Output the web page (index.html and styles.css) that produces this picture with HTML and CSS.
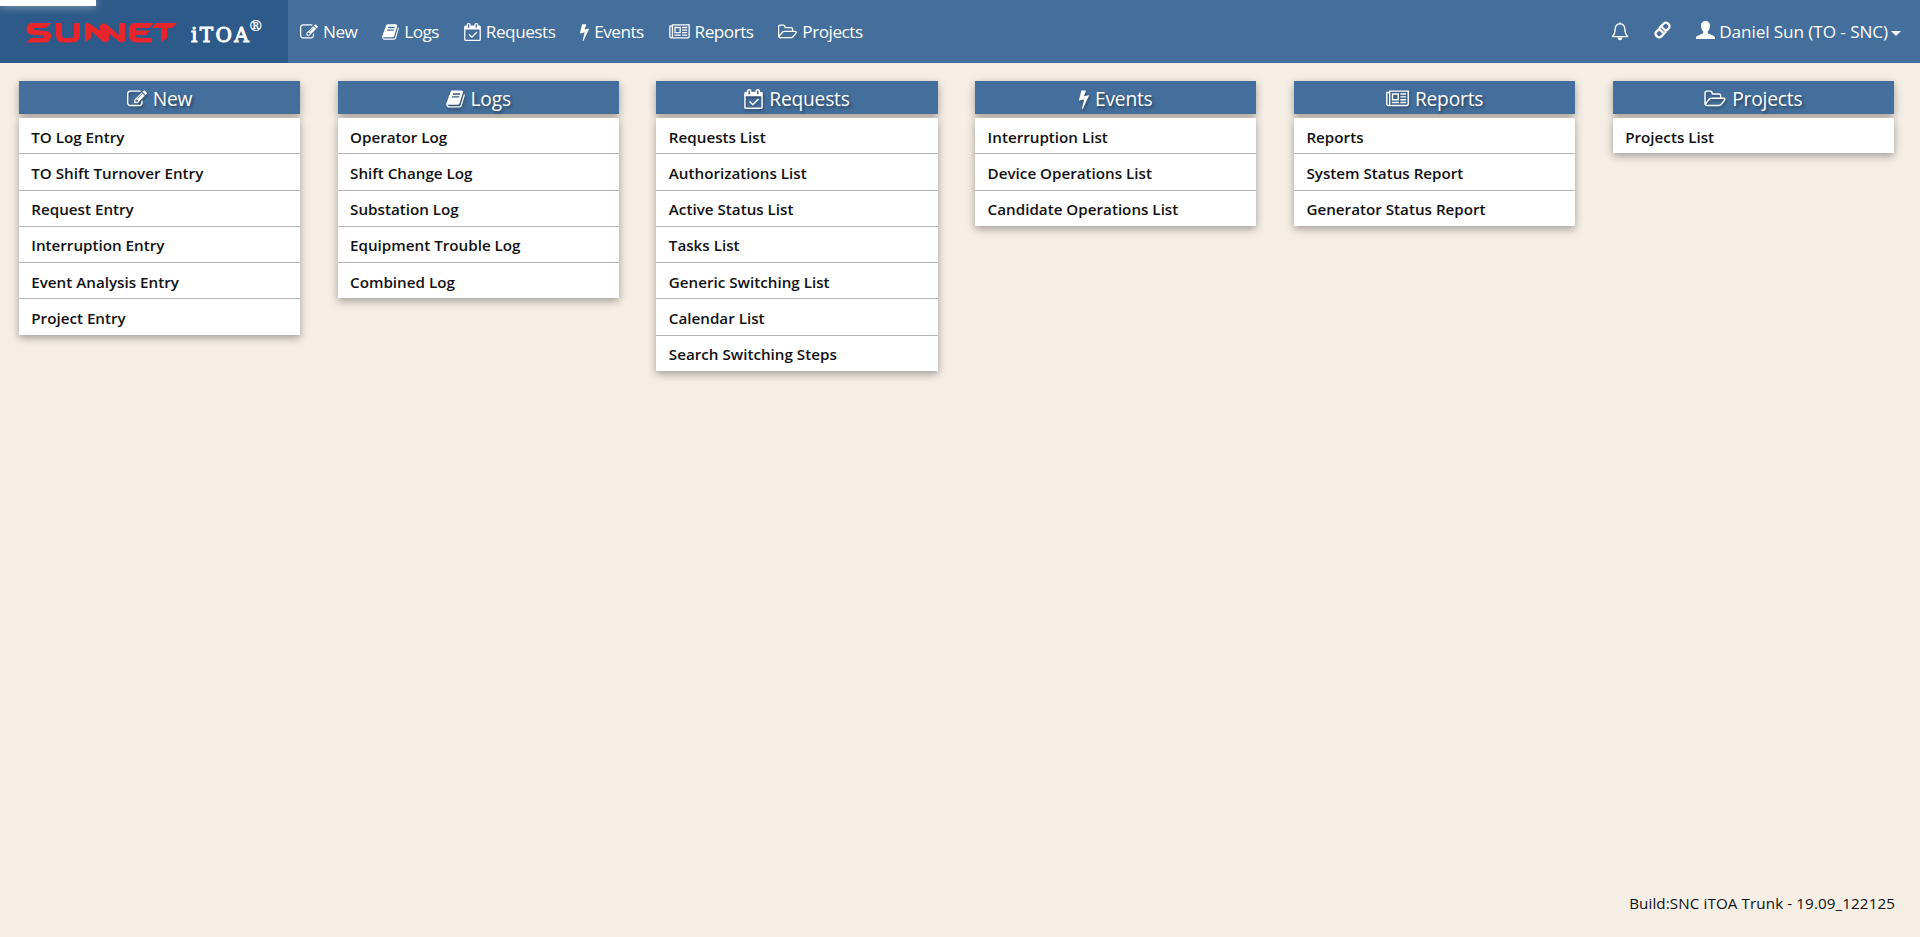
FILE: index.html
```html
<!DOCTYPE html>
<html lang="en">
<head>
<meta charset="utf-8">
<title>iTOA</title>
<link rel="stylesheet" href="styles.css">
</head>
<body>
<svg class="defs" aria-hidden="true">
  <symbol id="i-new" viewBox="0 0 1792 1792"><path d="M888 1184l116-116-152-152-116 116v56h96v96h56zm440-720q-16-16-33 1l-350 350q-17 17-1 33t33-1l350-350q17-17 1-33zm80 594v190q0 119-84.500 203.500t-203.500 84.500h-832q-119 0-203.500-84.500t-84.500-203.500v-832q0-119 84.500-203.500t203.500-84.500h832q63 0 117 25 15 7 18 23 3 17-9 29l-49 49q-14 14-32 8-23-6-45-6h-832q-66 0-113 47t-47 113v832q0 66 47 113t113 47h832q66 0 113-47t47-113v-126q0-13 9-22l64-64q15-15 35-7t20 29zm-96-738l288 288-672 672h-288v-288zm444 132l-92 92-288-288 92-92q28-28 68-28t68 28l152 152q28 28 28 68t-28 68z"/></symbol>
  <symbol id="i-book" viewBox="64 0 1664 1792"><path d="M1703 478q40 57 18 129l-275 906q-19 64-76.500 107.500t-122.500 43.500h-923q-77 0-148.500-53.500t-99.500-131.500q-24-67-2-127 0-4 3-27t4-37q1-8-3-21.500t-3-19.500q2-11 8-21t16.500-23.500 16.500-23.500q23-38 45-91.500t30-91.500q3-10 .5-30t-.5-28q3-11 17-28t17-23q21-36 42-92t25-90q1-9-2.500-32t.5-28q4-13 22-30.500t22-22.500q19-26 42.500-84.500t27.500-96.500q1-8-3-25.500t-2-26.500q2-8 9-18t18-23 17-21q8-12 16.500-30.500t15-35 16-36 19.500-32 26.500-23.500 36-11.500 47.500 5.500l-1 3q38-9 51-9h761q74 0 114 56t18 130l-274 906q-36 119-71.500 153.500t-128.500 34.500h-869q-27 0-38 15-11 16-1 43 24 70 144 70h923q29 0 56-15.500t35-41.500l300-987q7-22 5-57 38 15 59 43zm-1064 2q-4 13 2 22.500t20 9.500h608q13 0 25.500-9.500t16.500-22.500l21-64q4-13-2-22.500t-20-9.500h-608q-13 0-25.500 9.500t-16.500 22.500zm-83 256q-4 13 2 22.500t20 9.500h608q13 0 25.500-9.500t16.500-22.500l21-64q4-13-2-22.500t-20-9.500h-608q-13 0-25.500 9.500t-16.500 22.500z"/></symbol>
  <symbol id="i-cal" viewBox="0 0 1664 1792"><path d="M1303 964l-512 512q-10 9-23 9t-23-9l-288-288q-9-10-9-23t9-22l46-46q9-9 22-9t23 9l220 220 444-444q10-9 23-9t22 9l46 46q9 9 9 22t-9 23zm-1175 700h1408v-1024h-1408v1024zm384-1216v-288q0-14-9-23t-23-9h-64q-14 0-23 9t-9 23v288q0 14 9 23t23 9h64q14 0 23-9t9-23zm768 0v-288q0-14-9-23t-23-9h-64q-14 0-23 9t-9 23v288q0 14 9 23t23 9h64q14 0 23-9t9-23zm384-64v1280q0 52-38 90t-90 38h-1408q-52 0-90-38t-38-90v-1280q0-52 38-90t90-38h128v-96q0-66 47-113t113-47h64q66 0 113 47t47 113v96h384v-96q0-66 47-113t113-47h64q66 0 113 47t47 113v96h128q52 0 90 38t38 90z"/></symbol>
  <symbol id="i-bolt" viewBox="448 0 896 1792"><path d="M1333 566q18 20 7 44l-540 1157q-13 25-42 25-4 0-14-2-17-5-25.500-19t-4.500-30l197-808-406 101q-4 1-12 1-18 0-31-11-18-15-13-39l201-825q4-14 16-23t28-9h328q19 0 32 12.500t13 29.500q0 8-5 18l-171 463 396-98q8-2 12-2 19 0 34 15z"/></symbol>
  <symbol id="i-news" viewBox="0 0 2048 1792"><path d="M1024 512h-384v384h384v-384zm128 640v128h-640v-128h640zm0-768v640h-640v-640h640zm640 768v128h-512v-128h512zm0-256v128h-512v-128h512zm0-256v128h-512v-128h512zm0-256v128h-512v-128h512zm-1536 960v-960h-128v960q0 26 19 45t45 19 45-19 19-45zm1664 0v-1088h-1536v1088q0 33-11 64h1483q26 0 45-19t19-45zm128-1216v1216q0 80-56 136t-136 56h-1664q-80 0-136-56t-56-136v-1088h256v-128h1792z"/></symbol>
  <symbol id="i-folder" viewBox="64 0 1920 1792"><path d="M1845 931q0-35-53-35h-1088q-40 0-85.500 21.500t-71.500 52.500l-294 363q-18 24-18 40 0 35 53 35h1088q40 0 86-22t71-53l294-363q18-22 18-39zm-1141-163h768v-160q0-40-28-68t-68-28h-576q-40 0-68-28t-28-68v-64q0-40-28-68t-68-28h-320q-40 0-68 28t-28 68v853l256-315q44-53 116-87.500t140-34.500zm1269 163q0 62-46 120l-295 363q-43 53-116 87.500t-140 34.500h-1088q-92 0-158-66t-66-158v-960q0-92 66-158t158-66h320q92 0 158 66t66 158v32h544q92 0 158 66t66 158v160h192q54 0 99 24.500t67 70.500q15 32 15 68z"/></symbol>
</svg>

<div class="loading-bar"></div>
<header class="navbar">
  <a class="brand">
    <svg class="logo" viewBox="0 0 151 20">
      <path d="M5 0H25L20 5H8.500Q7 6 8.500 7L20 8Q26 9 25 14Q24 19.500 18 19.500H0L5 15H17Q19.500 14 17 12.500L5 11.500Q0 10 0.500 6Q1 1 5 0Z"/>
      <path d="M30 0H36V12Q36 15 39 15H45Q48 15 48 12V0H54V12Q54 19.500 46 19.500H38Q30 19.500 30 12Z"/>
      <path d="M59 19.500V2Q60-1 63.500 .5L74 8V3Q76-1 80 1L93 12V0H99V18Q97 20.500 94 19L83 10.500V17Q80 21 77 18.500L65 8V15Z"/>
      <path d="M109 0H128L123 5H112Q109.500 5 109.500 7.500H124L120 12H109.500Q109.500 15 113 15H126V19.500H111Q103 19.500 103 12V7Q103 0 109 0Z"/>
      <path d="M130 0H151L146 5H141V15L135 19.500V5H126Z"/>
    </svg>
    <span class="product">iTOA<sup>®</sup></span>
  </a>
  <nav class="menu">
    <a><svg class="ic w18"><use href="#i-new"/></svg><span>New</span></a>
    <a><svg class="ic w17"><use href="#i-book"/></svg><span>Logs</span></a>
    <a><svg class="ic w17"><use href="#i-cal"/></svg><span>Requests</span></a>
    <a><svg class="ic w9"><use href="#i-bolt"/></svg><span>Events</span></a>
    <a><svg class="ic w21"><use href="#i-news"/></svg><span>Reports</span></a>
    <a><svg class="ic w19"><use href="#i-folder"/></svg><span>Projects</span></a>
  </nav>
  <div class="tools">
    <svg class="bell" viewBox="0 0 18 19"><path d="M9 1.800C5.500 1.800 4.300 4.500 4.200 7C4.100 11 3.200 12.800 1.300 14.700H16.700C14.800 12.800 13.900 11 13.800 7C13.700 4.500 12.500 1.800 9 1.800Z" fill="none" stroke="#fff" stroke-width="1.300" stroke-linejoin="round"/><path d="M8.200 .4h1.600v1.500H8.200zM6.500 15.500h5q-.5 2.800-2.500 2.800t-2.500-2.800z"/></svg>
    <svg class="link" viewBox="0 0 18 19"><g fill="none" stroke="#fff" stroke-width="2.400" stroke-linecap="butt" stroke-linejoin="round"><path d="M9.800 12.600L6.200 9.200Q5.200 8 6.200 6.800L10.500 2.500Q12.500 .8 14.600 2.500L15.600 3.500Q17.300 5.500 15.600 7.600L13 10.200"/><path d="M8.200 6.400L11.800 9.800Q12.800 11 11.800 12.200L7.500 16.500Q5.500 18.200 3.400 16.500L2.400 15.500Q.7 13.500 2.400 11.400L5 8.800"/></g></svg>
    <a class="user"><svg class="person" viewBox="0 0 19 18"><path d="M9.500 0C12.300 0 14 1.700 14 4.500C14 7.500 12.900 9.300 11.800 10.400V12.200C13.200 13.400 18.500 14 19 16.500V18H0V16.500C.5 14 5.800 13.400 7.200 12.200V10.400C6.100 9.300 5 7.500 5 4.500C5 1.700 6.700 0 9.500 0Z"/></svg><span>Daniel Sun (TO - SNC)</span><i class="caret"></i></a>
  </div>
</header>

<main class="board">
  <section class="col">
    <h2><svg class="ic w20"><use href="#i-new"/></svg><span>New</span></h2>
    <ul><li>TO Log Entry</li><li>TO Shift Turnover Entry</li><li>Request Entry</li><li>Interruption Entry</li><li>Event Analysis Entry</li><li>Project Entry</li></ul>
  </section>
  <section class="col">
    <h2><svg class="ic w19"><use href="#i-book"/></svg><span>Logs</span></h2>
    <ul><li>Operator Log</li><li>Shift Change Log</li><li>Substation Log</li><li>Equipment Trouble Log</li><li>Combined Log</li></ul>
  </section>
  <section class="col">
    <h2><svg class="ic w19"><use href="#i-cal"/></svg><span>Requests</span></h2>
    <ul><li>Requests List</li><li>Authorizations List</li><li>Active Status List</li><li>Tasks List</li><li>Generic Switching List</li><li>Calendar List</li><li>Search Switching Steps</li></ul>
  </section>
  <section class="col">
    <h2><svg class="ic w10"><use href="#i-bolt"/></svg><span>Events</span></h2>
    <ul><li>Interruption List</li><li>Device Operations List</li><li>Candidate Operations List</li></ul>
  </section>
  <section class="col">
    <h2><svg class="ic w23"><use href="#i-news"/></svg><span>Reports</span></h2>
    <ul><li>Reports</li><li>System Status Report</li><li>Generator Status Report</li></ul>
  </section>
  <section class="col">
    <h2><svg class="ic w22"><use href="#i-folder"/></svg><span>Projects</span></h2>
    <ul><li>Projects List</li></ul>
  </section>
</main>
<footer class="build">Build:SNC iTOA Trunk - 19.09_122125</footer>
</body>
</html>
```
FILE: styles.css
```css
* { box-sizing: border-box; }
body {
  margin: 0;
  height: 937px;
  display: flex;
  flex-direction: column;
  overflow: hidden;
  background: #f5eee5;
  color: #111;
  font-family: "Open Sans", "Noto Sans", sans-serif;
  font-size: 15.2px;
}
.defs { position: absolute; width: 0; height: 0; }
svg { fill: #fff; flex: none; display: block; }

.loading-bar {
  position: absolute;
  top: 0;
  left: 0;
  width: 96px;
  height: 6px;
  background: #fff;
  box-shadow: 0 0 10px rgba(255, 255, 230, .6);
}

.navbar {
  height: 63px;
  flex: none;
  display: flex;
  background: #446e9b;
  color: #fff;
  font-size: 17.2px;
}
.brand {
  width: 288px;
  display: flex;
  background: #2d5a89;
  padding: 23px 0 0 26px;
}
.logo { width: 151px; height: 20px; fill: #e8252b; }
.product {
  display: flex;
  margin: -4px 0 0 14px;
  font: 20px/32px "DejaVu Serif", serif;
  letter-spacing: 2.4px;
  -webkit-text-stroke: 1px #fff;
}
.product sup {
  margin: -8px 0 0 -3px;
  font-size: 15px;
  line-height: 30px;
  letter-spacing: 0;
  vertical-align: baseline;
  -webkit-text-stroke: .3px #fff;
}

.menu { display: flex; padding-left: 12px; gap: 24.8px; letter-spacing: -.5px; }
.menu a, .user { display: flex; align-items: center; height: 63px; }
.menu span { margin-left: 5px; }
.user { letter-spacing: -.1px; }
.ic { height: 18px; }
.w9 { width: 9px; } .w10 { width: 10px; } .w17 { width: 17px; } .w18 { width: 18px; }
.w19 { width: 19px; } .w20 { width: 20px; } .w21 { width: 21px; } .w22 { width: 22px; } .w23 { width: 23px; }

.tools { margin-left: auto; display: flex; padding-right: 19px; }
.bell { width: 18px; height: 19px; margin: 22px 25px 0 0; }
.link { width: 17px; height: 18px; margin: 21px 25px 0 0; }
.person { width: 19px; height: 18px; margin: -3px 4px 0 0; }
.caret { border: 5px solid transparent; border-top-color: #fff; border-bottom: 0; margin: 3px 0 0 3px; }

.board {
  display: grid;
  grid-template-columns: repeat(6, 1fr);
  gap: 37.5px;
  padding: 18px 26px 0 18.75px;
  align-items: start;
}
.col h2 {
  margin: 0 0 4px;
  height: 33px;
  padding-top: 2px;
  display: flex;
  align-items: center;
  justify-content: center;
  gap: 6px;
  background: #446e9b;
  color: #fff;
  font-size: 19.2px;
  letter-spacing: -.2px;
  font-weight: 400;
  text-shadow: 2px 2px 3px rgba(0, 0, 0, .4);
  box-shadow: 0 3px 8px rgba(0, 0, 0, .35);
}
.col h2 .ic { height: 20px; filter: drop-shadow(1px 2px 1px rgba(0, 0, 0, .3)); }
.col ul {
  position: relative;
  margin: 0;
  padding: 0;
  list-style: none;
  background: #fff;
  box-shadow: 0 3px 8px rgba(0, 0, 0, .35);
}
.col li {
  height: 36.3px;
  padding: 1.6px 12.5px 0;
  line-height: 35px;
  border-bottom: 1px solid #b5b5b5;
  font-weight: 600;
}
.col li:last-child { height: 35.3px; border-bottom: 0; }

.build { margin: auto 25px 19px auto; line-height: 30px; letter-spacing: .1px; }
```
